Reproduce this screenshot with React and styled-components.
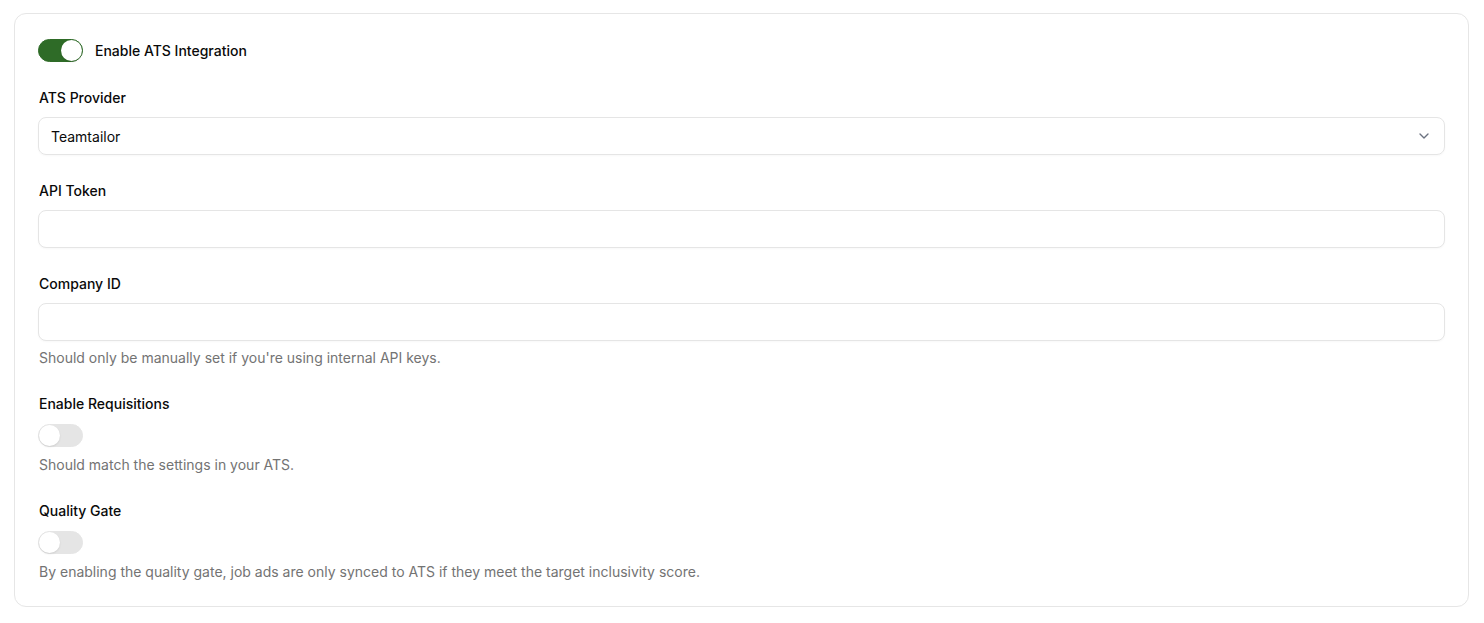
import React, { useState } from 'react'
import styled, { createGlobalStyle } from 'styled-components'

const Global = createGlobalStyle`
    body {
        margin: 0;
        background: #ffffff;
        font-family: Inter, "Noto Sans", sans-serif;
        color: #0a0a0a;
    }
`

const Switch = ({ on, onToggle }) => (
    <Track $on={on} onClick={onToggle}>
        <Knob $on={on} />
    </Track>
)

const Chevron = () => (
    <svg width="16" height="16" viewBox="0 0 24 24" fill="none" stroke="#6b7280" strokeWidth="2" strokeLinecap="round" strokeLinejoin="round">
        <path d="m6 9 6 6 6-6" />
    </svg>
)

const App = () => {
    const [ats, setAts] = useState(true)
    const [reqs, setReqs] = useState(false)
    const [gate, setGate] = useState(false)

    return (
        <Page>
            <Global />
            <Card>
                <InlineRow>
                    <Switch on={ats} onToggle={() => setAts(!ats)} />
                    <InlineLabel>Enable ATS Integration</InlineLabel>
                </InlineRow>

                <Field>
                    <Label>ATS Provider</Label>
                    <Select>
                        <span>Teamtailor</span>
                        <Chevron />
                    </Select>
                </Field>

                <Field>
                    <Label>API Token</Label>
                    <Input type="password" />
                </Field>

                <Field>
                    <Label>Company ID</Label>
                    <Input />
                    <Help>Should only be manually set if you're using internal API keys.</Help>
                </Field>

                <Field>
                    <Label>Enable Requisitions</Label>
                    <SwitchWrap>
                        <Switch on={reqs} onToggle={() => setReqs(!reqs)} />
                    </SwitchWrap>
                    <Help $after="switch">Should match the settings in your ATS.</Help>
                </Field>

                <Field>
                    <Label>Quality Gate</Label>
                    <SwitchWrap>
                        <Switch on={gate} onToggle={() => setGate(!gate)} />
                    </SwitchWrap>
                    <Help $after="switch">By enabling the quality gate, job ads are only synced to ATS if they meet the target inclusivity score.</Help>
                </Field>
            </Card>
        </Page>
    )
}

export default App

const Page = styled.div`
    padding: 13px 15px 16px 14px;
`
const Card = styled.div`
    border: 1px solid #e6e6e6;
    border-radius: 12px;
    padding: 25px 23px 24px 23px;
    display: flex;
    flex-direction: column;
    gap: 26px;
`
const InlineRow = styled.div`
    display: flex;
    align-items: center;
    gap: 12px;
`
const InlineLabel = styled.span`
    font-size: 14px;
    font-weight: 500;
    line-height: 20px;
`
const Track = styled.button`
    width: 45px;
    height: 23px;
    padding: 0;
    border-radius: 999px;
    border: 1px solid ${p => (p.$on ? '#2e6b27' : '#e5e5e5')};
    background: ${p => (p.$on ? '#2e6b27' : '#e5e5e5')};
    display: flex;
    align-items: center;
    cursor: pointer;
    flex-shrink: 0;
`
const Knob = styled.span`
    width: 21px;
    height: 21px;
    border-radius: 50%;
    background: #ffffff;
    box-shadow: 0 1px 2px rgba(0, 0, 0, 0.1);
    transform: translateX(${p => (p.$on ? '22px' : '0')});
`
const Field = styled.div`
    display: flex;
    flex-direction: column;
`
const Label = styled.label`
    font-size: 14px;
    font-weight: 500;
    line-height: 20px;
    margin-bottom: 9px;
    padding-left: 1px;
`
const Select = styled.div`
    height: 38px;
    box-sizing: border-box;
    border: 1px solid #e5e5e5;
    border-radius: 8px;
    padding: 0 12px;
    display: flex;
    align-items: center;
    justify-content: space-between;
    font-size: 14px;
    box-shadow: 0 1px 2px rgba(0, 0, 0, 0.03);
`
const Input = styled.input`
    height: 38px;
    box-sizing: border-box;
    border: 1px solid #e5e5e5;
    border-radius: 8px;
    padding: 0 12px;
    font-family: inherit;
    font-size: 14px;
    outline: none;
    box-shadow: 0 1px 2px rgba(0, 0, 0, 0.03);
`
const SwitchWrap = styled.div`
    display: flex;
    margin-top: 1px;
`
const Help = styled.p`
    margin: ${p => (p.$after === 'switch' ? '8px' : '7px')} 0 0;
    padding-left: 1px;
    font-size: 14px;
    line-height: 20px;
    color: #737373;
`
